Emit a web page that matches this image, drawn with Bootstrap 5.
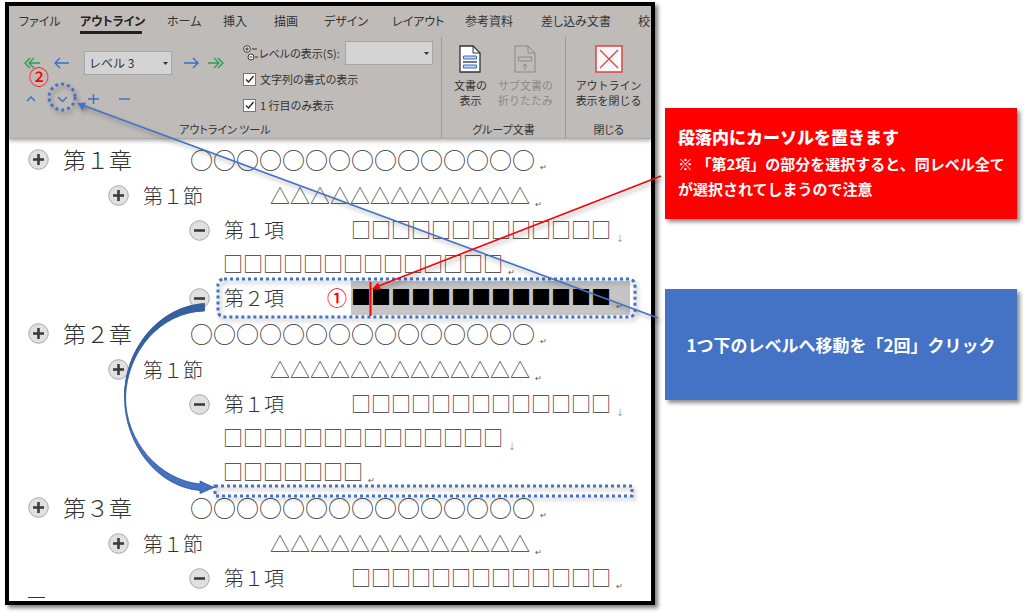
<!DOCTYPE html>
<html lang="ja">
<head>
<meta charset="utf-8">
<meta name="viewport" content="width=device-width, initial-scale=1">
<title>アウトライン</title>
<link href="https://cdn.jsdelivr.net/npm/bootstrap@5.3.0/dist/css/bootstrap.min.css" rel="stylesheet">
<style>
  body { font-family: "Noto Sans CJK JP", sans-serif; background: #fff; overflow-x: hidden; }
  .stage { display: grid; grid-template-columns: minmax(0, 650fr) minmax(0, 352fr); align-items: start; padding: 2px 7px 7px 5px; gap: 10px; }
  .word-window { border: 4px solid #000; box-shadow: 3px 3px 4px rgba(0,0,0,.5); overflow: hidden; }
  .notes { padding-top: 106px; gap: 70px; }

  .ribbon { background: #bfbbb8; color: #333; font-size: 11px; line-height: 14px; font-feature-settings: "palt"; border-bottom: 1px solid #aaa; box-shadow: 0 2px 4px rgba(0,0,0,.3); height: 133px; }
  .tab-row { display: grid; grid-template-columns: 61px 87px 56px 51px 50px 68px 73px 76px 97px 20px; padding: 6px 0 0 10px; height: 31px; white-space: nowrap; font-size: 12px; }
  .tab-row a { color: #333; text-decoration: none; line-height: 18px; justify-self: start; }
  .tab-row a.current { font-weight: 700; color: #222; border-bottom: 3px solid #222; height: 22px; width: 62px; }
  .tool-group + .tool-group { border-left: 1px solid #999; }
  .group-tools { flex: 433 1 0; }
  .group-docs { flex: 124 1 0; }
  .group-close { flex: 85 1 0; }
  .group-name { height: 16px; line-height: 15px; text-align: center; white-space: nowrap; }
  .level-tools { width: 234px; padding: 14px 0 0 15px; }
  .icon-btn { border: 0; background: none; padding: 0; line-height: 0; color: #3a6fc9; }
  .icon-btn.promote { color: #2a9d54; }
  .icon-btn svg, .big-btn svg { fill: none; stroke: currentColor; }
  .nudge { display: grid; grid-template-columns: 30px 30px 90px 34px 16px; align-items: center; height: 24px; }
  .moves { display: grid; grid-template-columns: repeat(4, 31px); height: 24px; margin-top: 12px; align-items: center; }
  .level-box { appearance: none; border: 1px solid #a5a5a5; border-radius: 0; background: #d4d4d4 url("data:image/svg+xml,%3Csvg xmlns='http://www.w3.org/2000/svg' width='5' height='3'%3E%3Cpath d='M0 0h5L2.5 3z' fill='%23333'/%3E%3C/svg%3E") no-repeat right 3px center; color: #333; width: 88px; height: 24px; padding: 0 4px; font-size: 12px; }
  .tick { appearance: none; width: 13px; height: 13px; margin: 0; border: 1px solid #777; background: #fff url("data:image/svg+xml,%3Csvg xmlns='http://www.w3.org/2000/svg' width='11' height='11'%3E%3Cpath d='M2 5.5l2.500 2.500 5-6' fill='none' stroke='%23222' stroke-width='1.300'/%3E%3C/svg%3E") center no-repeat; }
  .big-btn { border: 0; background: none; padding: 0; color: #333; line-height: 15px; white-space: nowrap; }
  .big-btn svg { margin-bottom: 5px; }
  .big-btn:disabled { color: #8a8a8a; }

  .outline-doc { padding-top: 2px; color: #333; font-weight: 300; }
  .line { display: flex; align-items: center; white-space: nowrap; height: 34px; font-size: 20px; line-height: 32px; padding-left: 180px; }
  .line.chapter { height: 37px; font-size: 23px; line-height: 34px; padding: 0 0 2px 19px; }
  .line.section { height: 35px; padding-left: 99px; }
  .line.follow { padding-left: 214px; }
  .heading-text { width: 127px; flex: none; }
  .knob { width: 21px; height: 21px; flex: none; margin-right: 14px; }
  .chapter .knob { position: relative; top: 1px; }
  .ret { font-size: 8px; color: #555; align-self: flex-end; line-height: 18px; margin-left: 5px; }
  .picked { background: #c5c5c5; color: #000; width: 279px; height: 34px; display: flex; }
  .cut-line { height: 6px; padding: 2px 0 0 19px; }

  .note { min-height: 111px; color: #fff; font-weight: 700; font-size: 15px; line-height: 25px; white-space: nowrap; box-shadow: 3px 3px 4px rgba(0,0,0,.45); }
  .note strong { display: block; font-size: 17px; line-height: 29px; }
  .note-red { background: #f00; padding: 14px 13px; }
  .note-blue { background: #4472c4; font-size: 17px; }
  .marks { position: absolute; left: 0; top: 0; pointer-events: none; font-weight: 500; font-size: 20px; }
  .soft { filter: drop-shadow(2px 3px 2px rgba(0,0,0,.35)); }
</style>
</head>
<body>
<div class="position-relative">
<main class="stage">
  <section class="word-window">
    <header class="ribbon d-flex flex-column position-relative">
      <nav class="tab-row">
        <a href="#">ファイル</a><a href="#" class="current">アウトライン</a><a href="#">ホーム</a><a href="#">挿入</a><a href="#">描画</a><a href="#">デザイン</a><a href="#">レイアウト</a><a href="#">参考資料</a><a href="#">差し込み文書</a><a href="#">校</a>
      </nav>
      <div class="d-flex flex-grow-1">
        <div class="tool-group group-tools d-flex flex-column">
          <div class="d-flex flex-grow-1">
            <div class="level-tools">
              <div class="nudge">
                <button class="icon-btn promote text-start" aria-label="見出し 1 に昇格"><svg width="16" height="12" stroke-width="1.4"><path d="M6 1L1 6l5 5M10 1L5 6l5 5M5 6h11"/></svg></button>
                <button class="icon-btn text-start" aria-label="レベル上げ"><svg width="16" height="12" stroke-width="1.4"><path d="M6 1L1 6l5 5M1 6h14"/></svg></button>
                <select class="level-box" aria-label="レベル"><option>レベル 3</option></select>
                <button class="icon-btn" aria-label="レベル下げ"><svg width="16" height="12" stroke-width="1.4"><path d="M10 1l5 5-5 5M1 6h14"/></svg></button>
                <button class="icon-btn promote" aria-label="標準文字列"><svg width="16" height="12" stroke-width="1.4"><path d="M10 1l5 5-5 5M6 1l5 5-5 5M0 6h11"/></svg></button>
              </div>
              <div class="moves">
                <button class="icon-btn text-start" aria-label="1 つ上のレベルへ移動"><svg width="14" height="12" stroke-width="1.4"><path d="M3 8l4-4 4 4"/></svg></button>
                <button class="icon-btn text-start" aria-label="1 つ下のレベルへ移動"><svg width="15" height="12" stroke-width="1.4"><path d="M3 4l4.500 4.500L12 4"/></svg></button>
                <button class="icon-btn text-start" aria-label="展開"><svg width="14" height="12" stroke-width="1.4"><path d="M2 6h11M7.500 1v10"/></svg></button>
                <button class="icon-btn text-start" aria-label="折りたたみ"><svg width="14" height="12" stroke-width="1.4"><path d="M2 6h11"/></svg></button>
              </div>
            </div>
            <div class="d-flex flex-column">
              <div class="d-flex align-items-center" style="height:32px">
                <svg width="16" height="16" fill="#fff" stroke="#333"><circle cx="4" cy="4" r="3.300"/><path d="M2 4h4M4 2v4M9 4h5M12 12h3"/><circle cx="8" cy="12" r="3"/><path d="M6.500 12h3"/></svg>
                <label for="lv" style="width:86px" class="text-nowrap">レベルの表示(S):</label>
                <select id="lv" class="level-box"><option></option></select>
              </div>
              <div class="d-flex align-items-center gap-1" style="height:20px"><input class="tick" type="checkbox" id="c1" checked><label for="c1">文字列の書式の表示</label></div>
              <div class="d-flex align-items-center gap-1" style="height:32px"><input class="tick" type="checkbox" id="c2" checked><label for="c2">1 行目のみ表示</label></div>
            </div>
          </div>
          <div class="group-name">アウトライン ツール</div>
        </div>
        <div class="tool-group group-docs d-flex flex-column">
          <div class="d-flex flex-grow-1 justify-content-center" style="padding-top:8px; gap:11px">
            <button class="big-btn d-flex flex-column align-items-center"><svg width="22" height="28"><path d="M1 1h13l7 7v19H1z" fill="#fff" stroke-width="1.300"/><path d="M14 1v7h7"/><path d="M4 17h14" stroke="#777" stroke-width="2"/><path d="M4.500 11h13v3h-13zM4.500 20h13v3h-13z" fill="#b9d2f5" stroke="#3a6fc9"/></svg>文書の<br>表示</button>
            <button class="big-btn d-flex flex-column align-items-center" disabled><svg width="22" height="28"><path d="M1 1h13l7 7v19H1zM14 1v7h7M4.500 12h13v4h-13zM11 25v-6M8.500 21.500L11 19l2.500 2.500"/></svg>サブ文書の<br>折りたたみ</button>
          </div>
          <div class="group-name">グループ文書</div>
        </div>
        <div class="tool-group group-close d-flex flex-column">
          <div class="d-flex flex-grow-1 justify-content-center" style="padding-top:8px">
            <button class="big-btn d-flex flex-column align-items-center"><svg width="28" height="28"><path d="M1 1h26v26H1z" fill="#f8f8f8" stroke="#d64541" stroke-width="1.500"/><path d="M5 5l18 18M23 5L5 23" stroke="#d64541" stroke-width="1.300"/></svg>アウトライン<br>表示を閉じる</button>
          </div>
          <div class="group-name">閉じる</div>
        </div>
      </div>
    </header>

    <svg width="0" height="0" class="position-absolute"><defs>
      <g id="minus"><circle cx="10.500" cy="10.500" r="9.800" fill="#e0e0e0" stroke="#a8a8a8"/><path d="M5 10.500h11" stroke="#3c3c3c" stroke-width="2.600"/></g>
      <g id="plus"><use href="#minus"/><path d="M10.500 5v11" stroke="#3c3c3c" stroke-width="2.600"/></g>
    </defs></svg>
    <article class="outline-doc">
      <div class="line chapter"><svg class="knob"><use href="#plus"/></svg><span class="heading-text">第１章</span>○○○○○○○○○○○○○○○<span class="ret">↵</span></div>
      <div class="line section"><svg class="knob"><use href="#plus"/></svg><span class="heading-text">第１節</span>△△△△△△△△△△△△△<span class="ret">↵</span></div>
      <div class="line"><svg class="knob"><use href="#minus"/></svg><span class="heading-text">第１項</span>□□□□□□□□□□□□□<span class="ret">↓</span></div>
      <div class="line follow">□□□□□□□□□□□□□□<span class="ret">↵</span></div>
      <div class="line"><svg class="knob"><use href="#minus"/></svg><span class="heading-text">第２項</span><span class="picked">■■■■■■■■■■■■■<span class="ret">↵</span></span></div>
      <div class="line chapter"><svg class="knob"><use href="#plus"/></svg><span class="heading-text">第２章</span>○○○○○○○○○○○○○○○<span class="ret">↵</span></div>
      <div class="line section"><svg class="knob"><use href="#plus"/></svg><span class="heading-text">第１節</span>△△△△△△△△△△△△△<span class="ret">↵</span></div>
      <div class="line"><svg class="knob"><use href="#minus"/></svg><span class="heading-text">第１項</span>□□□□□□□□□□□□□<span class="ret">↓</span></div>
      <div class="line follow">□□□□□□□□□□□□□□<span class="ret">↓</span></div>
      <div class="line follow">□□□□□□□<span class="ret">↵</span></div>
      <div class="line chapter"><svg class="knob"><use href="#plus"/></svg><span class="heading-text">第３章</span>○○○○○○○○○○○○○○○<span class="ret">↵</span></div>
      <div class="line section"><svg class="knob"><use href="#plus"/></svg><span class="heading-text">第１節</span>△△△△△△△△△△△△△<span class="ret">↵</span></div>
      <div class="line"><svg class="knob"><use href="#minus"/></svg><span class="heading-text">第１項</span>□□□□□□□□□□□□□<span class="ret">↵</span></div>
      <div class="cut-line"><svg class="d-block" width="17" height="2"><path d="M0 .5h17" stroke="#333"/></svg></div>
    </article>
  </section>

  <aside class="notes d-flex flex-column">
    <div class="note note-red"><strong>段落内にカーソルを置きます</strong>※ 「第2項」の部分を選択すると、同レベル全て<br>が選択されてしまうので注意</div>
    <div class="note note-blue d-flex align-items-center justify-content-center">1つ下のレベルへ移動を「2回」クリック</div>
  </aside>
</main>

<!-- arrows, dotted frames and step numbers laid over the window -->
<svg class="marks" width="1024" height="612" viewBox="0 0 1024 612">
  <g class="soft" fill="none" stroke="#4472c4" stroke-width="3" stroke-dasharray="3 3">
    <rect x="218" y="279" width="417" height="38" rx="6"/>
    <rect x="215" y="486" width="417" height="10"/>
    <circle cx="62" cy="97" r="13"/>
  </g>
  <path d="M204.500 303.500C160 306 124.500 348 124.500 397C124.500 445 158 487 200 490.500L200 493.500L214 487.500L200 481L200 484C160 480 125.500 442 125.500 397C127 352 160 312 204.500 311Z" fill="#4472c4" stroke="#2f5597" stroke-width=".8"/>
  <path d="M204.500 303.500C160 306 124.500 348 124.500 397H125.500C127 352 160 312 204.500 311Z" fill="#365f9f"/>
  <g class="soft">
    <path d="M658 318L82 105" stroke="#4472c4" stroke-width="1.600"/><path d="M77 103l9 -.5-3.500 8z" fill="#4472c4"/>
    <path d="M661 176L376 287" stroke="#f00" stroke-width="1.600"/><path d="M372 289l6-6.500 3 7z" fill="#f00"/>
  </g>
  <path d="M370.500 282v34" stroke="#f00" stroke-width="2"/>
  <text x="327" y="306" fill="#f00">①</text>
  <text x="29" y="85" fill="#f00">②</text>
</svg>
</div>
<script src="https://cdn.jsdelivr.net/npm/bootstrap@5.3.0/dist/js/bootstrap.bundle.min.js"></script>
</body>
</html>
